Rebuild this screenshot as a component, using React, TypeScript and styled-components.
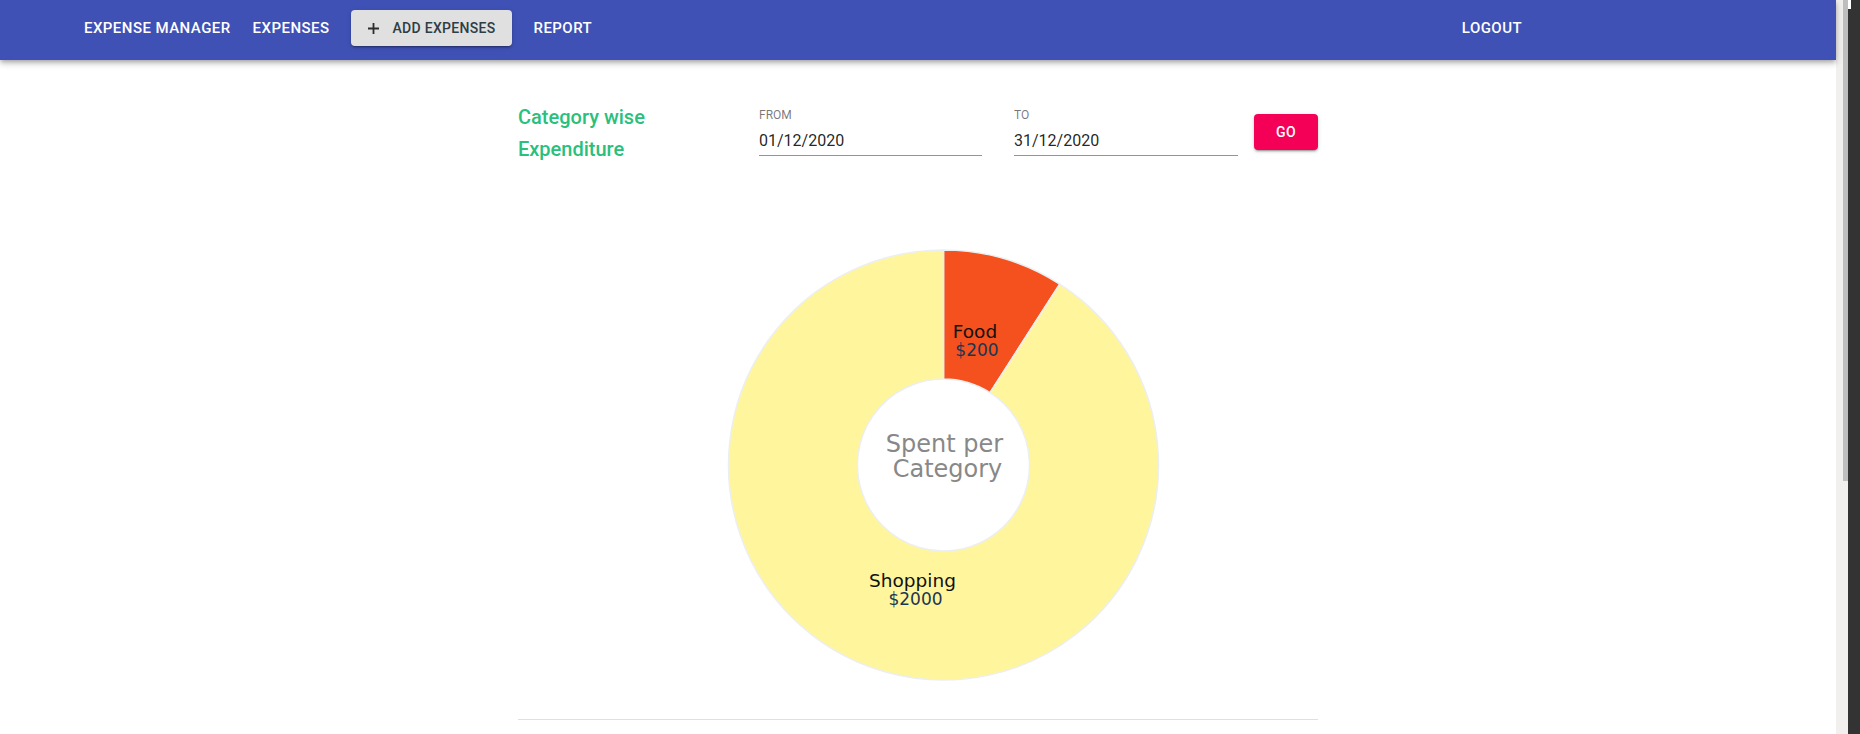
import React from "react";
import styled, { createGlobalStyle } from "styled-components";

const GlobalStyle = createGlobalStyle`
  html, body {
    margin: 0;
    padding: 0;
    height: 100%;
    overflow: hidden;
    background: #fff;
    font-family: Roboto, "Liberation Sans", Arial, sans-serif;
  }
  * { box-sizing: border-box; }
`;

const Root = styled.div`
  display: flex;
  height: 100vh;
  width: 100vw;
`;

const Page = styled.div`
  flex: 1;
  min-width: 0;
  display: flex;
  flex-direction: column;
`;

const AppBar = styled.header`
  position: relative;
  z-index: 2;
  height: 60px;
  background: #3f51b5;
  color: #fff;
  box-shadow: 0px 2px 4px -1px rgba(0, 0, 0, 0.2), 0px 4px 5px 0px rgba(0, 0, 0, 0.14),
    0px 1px 10px 0px rgba(0, 0, 0, 0.12);
`;

const Toolbar = styled.nav`
  height: 56px;
  display: flex;
  align-items: center;
  gap: 22px;
  padding: 0 314px 0 84px;
`;

const NavLink = styled.a<{ $push?: boolean }>`
  font-size: 15px;
  font-weight: 500;
  letter-spacing: 0.45px;
  text-transform: uppercase;
  color: #fff;
  text-decoration: none;
  white-space: nowrap;
  cursor: pointer;
  margin-left: ${(p) => (p.$push ? "auto" : "0")};
`;

const AddButton = styled.button`
  height: 36px;
  display: flex;
  align-items: center;
  gap: 13px;
  padding: 0 16px 0 17px;
  border: none;
  border-radius: 4px;
  background: #e0e0e0;
  color: #2f3d45;
  font-family: inherit;
  font-size: 14px;
  font-weight: 500;
  letter-spacing: 0.3px;
  text-transform: uppercase;
  white-space: nowrap;
  box-shadow: 0px 3px 1px -2px rgba(0, 0, 0, 0.2), 0px 2px 2px 0px rgba(0, 0, 0, 0.14),
    0px 1px 5px 0px rgba(0, 0, 0, 0.12);
  cursor: pointer;
`;

const Main = styled.main`
  width: 800px;
  margin: 0 auto;
  padding-top: 41px;
`;

const FilterRow = styled.section`
  display: flex;
  align-items: flex-start;
`;

const Title = styled.h6`
  flex: 0 0 241px;
  margin: 0;
  padding-right: 80px;
  font-size: 20px;
  font-weight: 500;
  line-height: 1.6;
  color: #2bbf7d;
`;

const Field = styled.label<{ $gap: number; $width: number }>`
  flex: 0 0 ${(p) => p.$width}px;
  display: flex;
  flex-direction: column;
  margin-top: 6px;
  margin-right: ${(p) => p.$gap}px;
`;

const FieldLabel = styled.span`
  font-size: 12px;
  line-height: 16px;
  color: rgba(0, 0, 0, 0.54);
  text-transform: uppercase;
`;

const FieldInput = styled.input`
  margin-top: 8px;
  width: 100%;
  border: none;
  border-bottom: 1px solid rgba(0, 0, 0, 0.42);
  padding: 0 0 5px;
  outline: none;
  font-family: inherit;
  font-size: 16px;
  line-height: 19px;
  height: 25px;
  color: rgba(0, 0, 0, 0.87);
  background: transparent;
`;

const GoButton = styled.button`
  flex: 0 0 64px;
  height: 36px;
  margin-top: 13px;
  border: none;
  border-radius: 4px;
  background: #f50057;
  color: #fff;
  font-family: inherit;
  font-size: 14px;
  font-weight: 500;
  letter-spacing: 0.4px;
  box-shadow: 0px 3px 1px -2px rgba(0, 0, 0, 0.2), 0px 2px 2px 0px rgba(0, 0, 0, 0.14),
    0px 1px 5px 0px rgba(0, 0, 0, 0.12);
  cursor: pointer;
`;

const ChartWrap = styled.figure`
  margin: 40px 0 0;
  height: 514px;
  svg {
    display: block;
  }
`;

const Divider = styled.hr`
  margin: 0;
  border: none;
  height: 1px;
  background: rgba(0, 0, 0, 0.12);
`;

const ScrollStrip = styled.aside`
  flex: 0 0 24px;
  display: flex;
  height: 100%;
`;

const Track = styled.div`
  flex: 0 0 7px;
  background: #f1f0ef;
`;

const ThumbLane = styled.div`
  flex: 0 0 5px;
  display: flex;
  flex-direction: column;
  background: #f1f0ef;
`;

const Thumb = styled.div`
  height: 481px;
  background: #bebebe;
`;

const WindowEdge = styled.div`
  flex: 1;
  background: linear-gradient(#fff, #fff) no-repeat 0 0 / 3px 9px, #333333;
`;

const PlusIcon = () => (
  <svg width="11" height="11" viewBox="0 0 11 11" aria-hidden>
    <path d="M5.5 0v11M0 5.5h11" stroke="rgba(0,0,0,0.8)" strokeWidth="1.8" />
  </svg>
);

type Slice = { name: string; amount: number; color: string; label: [number, number]; value: [number, number] };

const slices: Slice[] = [
  { name: "Food", amount: 200, color: "#f4511e", label: [457, 133], value: [459, 151] },
  { name: "Shopping", amount: 2000, color: "#fff59d", label: [394.5, 382], value: [397.5, 400] },
];

const CX = 425.5;
const CY = 260;
const R = 215;
const RI = 86;

function arcPath(a0: number, a1: number) {
  const p = (r: number, a: number) => [CX + r * Math.sin(a), CY - r * Math.cos(a)];
  const large = a1 - a0 > Math.PI ? 1 : 0;
  const [x0, y0] = p(R, a0);
  const [x1, y1] = p(R, a1);
  const [x2, y2] = p(RI, a1);
  const [x3, y3] = p(RI, a0);
  return `M${x0} ${y0} A${R} ${R} 0 ${large} 1 ${x1} ${y1} L${x2} ${y2} A${RI} ${RI} 0 ${large} 0 ${x3} ${y3} Z`;
}

const PieChart = () => {
  const total = slices.reduce((s, d) => s + d.amount, 0);
  let acc = 0;
  const arcs = slices.map((d) => {
    const a0 = (acc / total) * Math.PI * 2;
    acc += d.amount;
    const a1 = (acc / total) * Math.PI * 2;
    return { ...d, path: arcPath(a0, a1) };
  });
  const font = '"DejaVu Sans", Verdana, sans-serif';
  return (
    <svg width="800" height="514" viewBox="0 0 800 514">
      {arcs.map((a) => (
        <path key={a.name} d={a.path} fill={a.color} stroke="#eceff1" strokeWidth="1.5" />
      ))}
      {arcs.map((a) => (
        <g key={a.name + "t"} fontFamily={font} textAnchor="middle">
          <text x={a.label[0]} y={a.label[1]} fontSize="18.5" fill="#111">
            {a.name}
          </text>
          <text x={a.value[0]} y={a.value[1]} fontSize="17" fill="#1c3553">
            ${a.amount}
          </text>
        </g>
      ))}
      <g fontFamily={font} textAnchor="middle" fontSize="24" fill="#888">
        <text x="426.5" y="247">Spent per</text>
        <text x="429.5" y="272">Category</text>
      </g>
    </svg>
  );
};

export default function App() {
  return (
    <>
      <GlobalStyle />
      <Root>
        <Page>
          <AppBar>
            <Toolbar>
              <NavLink>Expense Manager</NavLink>
              <NavLink>Expenses</NavLink>
              <AddButton>
                <PlusIcon />
                Add Expenses
              </AddButton>
              <NavLink>Report</NavLink>
              <NavLink $push>Logout</NavLink>
            </Toolbar>
          </AppBar>
          <Main>
            <FilterRow>
              <Title>Category wise Expenditure</Title>
              <Field $gap={32} $width={223}>
                <FieldLabel>From</FieldLabel>
                <FieldInput defaultValue="01/12/2020" readOnly />
              </Field>
              <Field $gap={16} $width={224}>
                <FieldLabel>To</FieldLabel>
                <FieldInput defaultValue="31/12/2020" readOnly />
              </Field>
              <GoButton>GO</GoButton>
            </FilterRow>
            <ChartWrap>
              <PieChart />
            </ChartWrap>
            <Divider />
          </Main>
        </Page>
        <ScrollStrip>
          <Track />
          <ThumbLane>
            <Thumb />
          </ThumbLane>
          <WindowEdge />
        </ScrollStrip>
      </Root>
    </>
  );
}
